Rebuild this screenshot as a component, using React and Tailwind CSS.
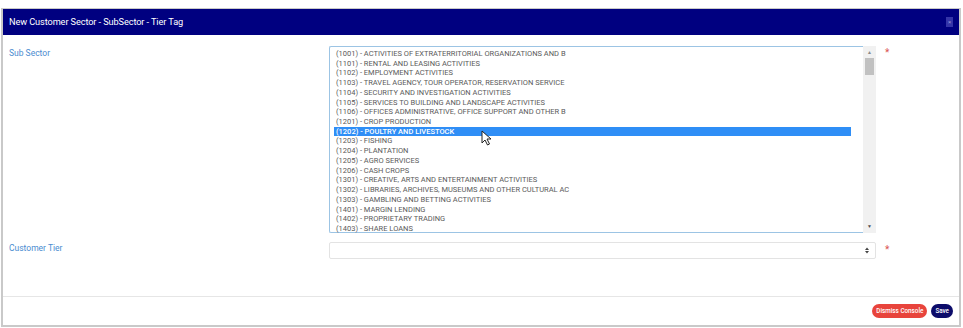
const sectors = [
  '(1001) - ACTIVITIES OF EXTRATERRITORIAL ORGANIZATIONS AND B',
  '(1101) - RENTAL AND LEASING ACTIVITIES',
  '(1102) - EMPLOYMENT ACTIVITIES',
  '(1103) - TRAVEL AGENCY, TOUR OPERATOR, RESERVATION SERVICE',
  '(1104) - SECURITY AND INVESTIGATION ACTIVITIES',
  '(1105) - SERVICES TO BUILDING AND LANDSCAPE ACTIVITIES',
  '(1106) - OFFICES ADMINISTRATIVE, OFFICE SUPPORT AND OTHER B',
  '(1201) - CROP PRODUCTION',
  '(1202) - POULTRY AND LIVESTOCK',
  '(1203) - FISHING',
  '(1204) - PLANTATION',
  '(1205) - AGRO SERVICES',
  '(1206) - CASH CROPS',
  '(1301) - CREATIVE, ARTS AND ENTERTAINMENT ACTIVITIES',
  '(1302) - LIBRARIES, ARCHIVES, MUSEUMS AND OTHER CULTURAL AC',
  '(1303) - GAMBLING AND BETTING ACTIVITIES',
  '(1401) - MARGIN LENDING',
  '(1402) - PROPRIETARY TRADING',
  '(1403) - SHARE LOANS',
];

const selected = '(1202) - POULTRY AND LIVESTOCK';

const Cursor = () => (
  <svg className="absolute left-[481px] top-[130px]" width="11" height="16" viewBox="0 0 11 16">
    <path d="M1 1 L1 13 L4 10 L6.5 15 L8.5 14 L6 9 L10 9 Z" fill="white" stroke="#222" strokeWidth="1" strokeLinejoin="round" />
  </svg>
);

export default function App() {
  return (
    <div className="w-[963px] h-[328px] bg-white pt-[8px] pl-[1px] font-['Roboto',sans-serif] relative">
      <div className="w-[960px] h-[319px] border-2 border-t-0 border-[#c9c9c9] flex flex-col">
        <div className="h-[27px] bg-[#000080] flex items-center justify-between pl-[6px] pr-[6px] border-t border-[#c9c9c9]">
          <span className="text-white text-[9.2px] tracking-[-0.1px]">New Customer Sector - SubSector - Tier Tag</span>
          <div className="w-[7px] h-[10px] bg-[#3434a8] flex items-center justify-center text-[6px] leading-none text-[#9a9ad8]">×</div>
        </div>

        <div className="flex-1 pt-[11px] pl-[6px] flex flex-col gap-[9px]">
          <div className="flex">
            <div className="w-[320px] text-[8.5px] text-[#4a8cd0] pt-[1px]">Sub Sector</div>
            <div className="flex h-[187px]">
              <div className="w-[534px] border border-r-0 border-[#9cc4e4] rounded-l-[2px] pt-[2px] pl-[4px]">
                {sectors.map((s) => (
                  <div
                    key={s}
                    className={
                      s === selected
                        ? 'mr-[12px] h-[9.72px] leading-[9.72px] text-[7.5px] bg-[#2f8ef6] text-white font-medium pl-[2px] whitespace-nowrap'
                        : 'mr-[12px] h-[9.72px] leading-[9.72px] text-[7.5px] text-[#5a5a5a] pl-[2px] whitespace-nowrap'
                    }
                  >
                    {s}
                  </div>
                ))}
              </div>
              <div className="w-[13px] bg-[#f1f1f1] flex flex-col items-center pt-[1px] pb-[2px]">
                <div className="h-[10px] flex items-center text-[#8a8a8a] text-[5px] leading-none">▲</div>
                <div className="w-[9px] h-[17px] bg-[#c1c1c1] mt-[1px]" />
                <div className="flex-1" />
                <div className="h-[10px] flex items-center text-[#505050] text-[5px] leading-none">▼</div>
              </div>
            </div>
            <span className="ml-[9px] text-[#d9534f] text-[10px] leading-none pt-[2px]">*</span>
          </div>

          <div className="flex">
            <div className="w-[320px] text-[8.5px] text-[#4a8cd0]">Customer Tier</div>
            <div className="w-[547px] h-[17px] border border-[#e3e3e3] rounded-[2px] flex items-center justify-end pr-[6px]">
              <svg width="4" height="7" viewBox="0 0 4 7">
                <path d="M0 3 L2 0.5 L4 3 Z M0 4 L2 6.5 L4 4 Z" fill="#444" />
              </svg>
            </div>
            <span className="ml-[9px] text-[#d9534f] text-[10px] leading-none pt-[3px]">*</span>
          </div>
        </div>

        <div className="h-[29px] border-t border-[#e6e6e6] flex items-center justify-end gap-[4px] pr-[6px]">
          <button className="h-[14px] px-[4px] rounded-full bg-[#e8443c] text-white text-[6.3px] font-medium leading-none">Dismiss Console</button>
          <button className="h-[14px] px-[4px] rounded-full bg-[#0c0c6a] text-white text-[6.3px] font-medium leading-none">Save</button>
        </div>
      </div>
      <Cursor />
    </div>
  );
}
